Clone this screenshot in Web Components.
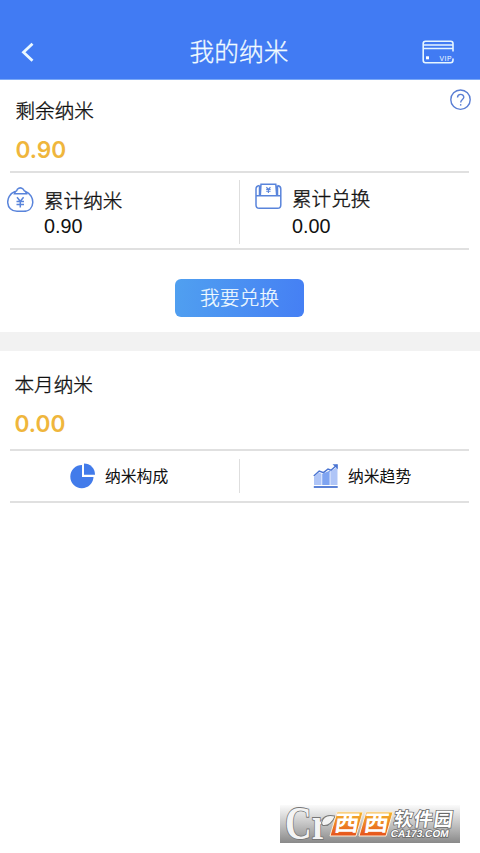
<!DOCTYPE html>
<html lang="zh-CN">
<head>
<meta charset="utf-8">
<title>我的纳米</title>
<style>
html,body{margin:0;height:100%;background:#fff}
body{font-family:"Liberation Sans","Noto Sans CJK SC",sans-serif;color:#111;overflow:hidden}
</style>
</head>
<body>
<nano-page></nano-page>
<script>
const define = (name, html) => customElements.define(name, class extends HTMLElement {
  constructor() {
    super();
    const t = document.createElement('template');
    t.innerHTML = html;
    this.attachShadow({mode: 'open'}).append(t.content.cloneNode(true));
  }
});

define('nano-header', `<style>
:host{display:grid;grid-template-columns:60px 1fr 60px;align-items:center;height:79.500px;box-sizing:border-box;padding-top:24px;background:#417bf3;border-bottom:1px solid #7ba9f7;color:#f2fbff}
h1{margin:0;padding:2px 2px 0 0;text-align:center;font-size:24.700px;line-height:54px;font-weight:300;-webkit-text-stroke:.3px}
svg{display:block}
.back{margin-left:20px}.card{margin-left:2px}
</style>
<svg class="back" width="16" height="20" viewBox="0 0 16 20" fill="none" stroke="#eaf8ff" stroke-width="2.800"><path d="M12.500 1.700 3.500 10.200l9 8.500"/></svg>
<h1><slot></slot></h1>
<svg class="card" width="34" height="26" viewBox="0 0 34 26" fill="none" stroke="#e6f6ff" stroke-width="1.600"><path d="M31 12.500V4.500Q31 2.200 28.700 2.200H3.500Q1.200 2.200 1.200 4.500V21.200Q1.200 23.700 3.500 23.700H28.500Q31 23.700 31 21V19.500M1.500 6H31M1.500 9.500H31"/><rect x="4" y="17.300" width="3" height="3" fill="#fff" stroke="none"/><text x="17.500" y="21.500" font-family="Liberation Sans" font-size="6.800" fill="#f2fbff" stroke="none" textLength="12">VIP</text></svg>`);

define('nano-balance', `<style>
:host{display:block;height:91.500px;box-sizing:border-box;padding:17px 9px 0 15.500px}
.row{display:flex;justify-content:space-between;height:28px}
.label{font-size:19.600px;line-height:29px;font-weight:300;-webkit-text-stroke:.35px}
.value{font:600 22.700px/28px Inter,sans-serif;color:#efb63c;margin-top:11px}
</style>
<div class="row"><span class="label"><slot name="label"></slot></span><slot name="help"></slot></div>
<div class="value"><slot></slot></div>`);

define('nano-help', `<style>:host{display:block;margin-top:-8px}svg{display:block}</style>
<svg width="22" height="22" viewBox="0 0 22 22" fill="none" stroke="#5a7ed4" stroke-width="1.400"><circle cx="11.500" cy="10.700" r="9.700"/><path d="M8.500 8.600C8.500 4.400 14.800 4.400 14.800 8.300C14.800 10.400 11.700 10.700 11.700 13.400"/><circle cx="11.700" cy="15.900" r=".8" fill="#5a7ed4" stroke="none"/></svg>`);

define('nano-split', `<style>
:host{display:grid;grid-template-columns:228.500px 1px 1fr;border:solid #e0e0e0;border-width:2px 0;margin:0 11px 0 10px;box-sizing:border-box;height:var(--h)}
i{background:#dedede;margin:var(--gap) 0;width:1.500px}
</style><slot name="left"></slot><i></i><slot name="right"></slot>`);

define('nano-stat', `<style>
:host{display:flex;padding-top:var(--top)}
.ico{margin:var(--ico)}
.t{font-size:19.600px;line-height:27px;font-weight:300;-webkit-text-stroke:.35px}
.v{font-size:19.800px;line-height:22px;margin-top:var(--vg,0)}
</style><div class="ico"><slot name="icon"></slot></div><div><div class="t"><slot name="label"></slot></div><div class="v"><slot></slot></div></div>`);

define('icon-purse', `<style>:host,svg{display:block}</style>
<svg width="28" height="28" viewBox="0 0 28 28" fill="none" stroke="#5984db" stroke-width="1.500"><path d="M8 5.500C-2.500 9.500-1.500 25.300 10 25.300H16.500C28.500 25.300 28.500 9 18.500 5.500M7.500 7.800 8.500 5.500Q10 5 10.300 3.300Q13.300.5 16.300 3.300Q17 5 18.500 5.500L19.500 7.800Z"/><path d="m10 11.300 3.300 4 3.300-4M13.300 15.500V21.500M9.500 15.500H17M9.500 18.500H17"/></svg>`);

define('icon-wallet', `<style>:host,svg{display:block}</style>
<svg width="28" height="28" viewBox="0 0 28 28" fill="none" stroke="#5984db" stroke-width="1.500"><path d="M5.500 2.500Q2 3 2 6V22Q2 25.300 5.300 25.300H23.500Q26.800 25.300 26.800 22V6Q26.800 3 23.500 2.500M2 12.800H26.800M6.300 12.800 7 1.200H21.800L22.700 12.800M5.500 2.500V12.500M23.500 2.500V12.500"/><path stroke-width="1.100" d="m12.400 4.200 2 2.200 2-2.200M14.400 6.200V10M12.200 6.400H16.600M12.200 8.200H16.600"/></svg>`);

define('nano-button', `<style>
:host{display:flex;justify-content:center;padding:29px 1px 15px 0;height:38px}
button{all:unset;box-sizing:border-box;width:129px;height:38px;border-radius:6px;background:linear-gradient(100deg,#50a0f0,#457ff4);color:#f2fbff;font-size:19.800px;font-weight:300;-webkit-text-stroke:.2px;line-height:38px;text-align:center}
</style><button><slot></slot></button>`);

define('nano-link', `<style>
:host{display:flex;align-items:center;font-size:15.800px;padding-left:var(--pl)}
span{margin-left:var(--g);line-height:24px;padding-top:1.500px}
</style><slot name="icon"></slot><span><slot></slot></span>`);

define('icon-pie', `<style>:host,svg{display:block}</style>
<svg width="26" height="26" viewBox="0 0 26 26" fill="#427bea"><path d="M12 2A11.600 11.600 0 1 0 23.500 14H12Z"/><path d="M14 .5A11 11 0 0 1 25 11.800H14Z"/></svg>`);

define('icon-trend', `<style>:host,svg{display:block}</style>
<svg width="26" height="26" viewBox="0 0 26 26"><path fill="#afc5f7" d="M1 14 6 9.500 9 11V22H1ZM17 8.500 24.500 4V22H17Z"/><path fill="#7fa4f1" d="m9 11 8-3.500V22H9Z"/><path stroke="#fff" stroke-width=".7" d="M8.800 11V22M17 9V22"/><path fill="none" stroke="#4a74d2" stroke-width="1.500" d="M.8 13 6.200 8 10.500 9.700 15 6 18 7.200 24 2"/><path fill="#4a74d2" d="M19.500 1.200H24.800V6.200Z"/><path stroke="#4a74d2" stroke-width="1.800" d="M.8 24H24.700"/></svg>`);

define('site-mark', `<style>:host{display:block;position:absolute;left:280px;top:805px}svg{display:block;overflow:visible}</style>
<svg width="180" height="38" viewBox="0 0 180 38">
<defs><linearGradient id="bg" x2="0" y2="1"><stop stop-color="#fbfbfb"/><stop offset=".5" stop-color="#c4c4c4"/><stop offset="1" stop-color="#898989"/></linearGradient>
<linearGradient id="or" x2="0" y2="1"><stop stop-color="#f4b52b"/><stop offset="1" stop-color="#e5511d"/></linearGradient></defs>
<rect width="180" height="38" fill="url(#bg)"/>
<g fill="#f4f4f4" stroke="#777" stroke-width="1.800" paint-order="stroke">
<text x="5" y="33.500" font-family="Liberation Serif" font-weight="700" font-size="46" textLength="43" lengthAdjust="spacingAndGlyphs">Cr</text>
<path d="M42 18Q44 9 54.500 11.500Q50 21 43 20Z"/></g>
<path d="M57 7H83L76 31H50ZM86 7H113L106 31H79Z" fill="url(#or)" stroke="#fff0d8" stroke-width="1"/>
<g font-family="Noto Sans CJK SC" font-weight="700" fill="#fff">
<g transform="skewX(-9)"><text x="57.500" y="26.500" font-size="22" textLength="25" lengthAdjust="spacingAndGlyphs">西</text><text x="87" y="26.500" font-size="22" textLength="25" lengthAdjust="spacingAndGlyphs">西</text></g>
<g stroke="#686868" stroke-width="1.500" paint-order="stroke"><text transform="skewX(-8)" x="116" y="21" font-size="19" textLength="59">软件园</text>
<text transform="skewX(-10)" x="116" y="32.500" font-family="Liberation Sans" font-size="10" textLength="58" lengthAdjust="spacingAndGlyphs">CA173.COM</text></g></g></svg>`);

define('nano-page', `<style>
:host{display:block}
.band{height:19px;background:#f2f2f2}
.sum{--h:78.500px;--gap:7px 0 4px}
.links{--h:54px;--gap:8px 0 8px}
</style>
<nano-header>我的纳米</nano-header>
<nano-balance><span slot="label">剩余纳米</span><nano-help slot="help"></nano-help>0.90</nano-balance>
<nano-split class="sum">
<nano-stat slot="left" style="--top:14.500px;--ico:-2px 9.500px 0 -3.500px"><icon-purse slot="icon"></icon-purse><span slot="label">累计纳米</span>0.90</nano-stat>
<nano-stat slot="right" style="--top:12.500px;--ico:-3px 10px 0 14.500px;--vg:2px"><icon-wallet slot="icon"></icon-wallet><span slot="label">累计兑换</span>0.00</nano-stat>
</nano-split>
<nano-button>我要兑换</nano-button>
<div class="band"></div>
<nano-balance style="height:98.500px;padding-top:20px;padding-left:14.500px"><span slot="label">本月纳米</span>0.00</nano-balance>
<nano-split class="links">
<nano-link slot="left" style="--pl:59.500px;--g:9.500px"><icon-pie slot="icon"></icon-pie>纳米构成</nano-link>
<nano-link slot="right" style="--pl:73.500px;--g:9px"><icon-trend slot="icon"></icon-trend>纳米趋势</nano-link>
</nano-split>
<site-mark></site-mark>`);
</script>
</body>
</html>
